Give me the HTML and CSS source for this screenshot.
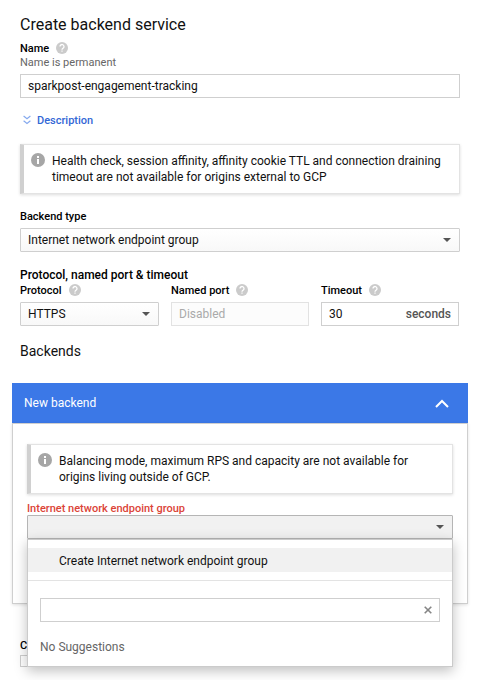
FILE: index.html
```html
<!DOCTYPE html>
<html lang="en">
<head>
<meta charset="utf-8">
<title>Create backend service</title>
<link rel="stylesheet" href="styles.css">
</head>
<body>
<svg width="0" height="0" class="defs" aria-hidden="true">
  <symbol id="help" viewBox="0 0 12 12">
    <circle cx="6" cy="6" r="6" fill="#cbcbcb"/>
    <path d="M4 4.600a2 2 0 1 1 3.100 1.600C6.400 6.700 6 6.900 6 7.700" fill="none" stroke="#fff" stroke-width="1.300"/>
    <path d="M5.400 8.500h1.200v1.200H5.400z" fill="#fff"/>
  </symbol>
  <symbol id="info" viewBox="0 0 14 14">
    <circle cx="7" cy="7" r="7" fill="#a6a6a6"/>
    <path d="M6 3h2v2H6zM6 6h2v5H6z" fill="#fff"/>
  </symbol>
</svg>
<main class="form">
  <h1 class="title">Create backend service</h1>
  <label class="label">Name <svg class="help"><use href="#help"/></svg></label>
  <p class="hint">Name is permanent</p>
  <div class="field">sparkpost-engagement-tracking</div>

  <a class="toggle">
    <svg class="toggle-icon" viewBox="0 0 8 10"><path d="M.6 1 4 3.700 7.400 1M.6 5.700 4 8.400 7.400 5.700" fill="none" stroke="#85a9ee" stroke-width="1.200"/></svg>
    Description
  </a>

  <div class="notice">
    <svg class="info"><use href="#info"/></svg>
    <p>Health check, session affinity, affinity cookie TTL and connection draining<br>timeout are not available for origins external to GCP</p>
  </div>

  <label class="label type-label">Backend type</label>
  <div class="field select"><span class="type-value">Internet network endpoint group</span><i class="arrow"></i></div>

  <h2 class="group">Protocol, named port &amp; timeout</h2>
  <div class="columns">
    <div>
      <label class="label">Protocol <svg class="help"><use href="#help"/></svg></label>
      <div class="field select"><span class="https">HTTPS</span><i class="arrow"></i></div>
    </div>
    <div>
      <label class="label">Named port <svg class="help"><use href="#help"/></svg></label>
      <div class="field disabled">Disabled</div>
    </div>
    <div>
      <label class="label">Timeout <svg class="help"><use href="#help"/></svg></label>
      <div class="field select timeout"><span>30</span><span class="unit">seconds</span></div>
    </div>
  </div>

  <h2 class="section">Backends</h2>
  <section class="panel">
    <header class="panel-head">
      <span>New backend</span>
      <svg class="chevron" viewBox="0 0 14 9"><path d="M1 8 7 2l6 6" fill="none" stroke="#fff" stroke-width="2"/></svg>
    </header>
    <div class="panel-body">
      <div class="notice">
        <svg class="info"><use href="#info"/></svg>
        <p>Balancing mode, maximum RPS and capacity are not available for<br>origins living outside of GCP.</p>
      </div>
      <label class="label error">Internet network endpoint group</label>
      <div class="dropdown">
        <div class="field select open"><span></span><i class="arrow"></i></div>
        <div class="menu">
          <div class="menu-item">Create Internet network endpoint group</div>
          <div class="menu-search">
            <svg class="clear" viewBox="0 0 8 8"><path d="m.7.7 6.600 6.600M7.300.7.7 7.300" stroke="#858585" stroke-width="1.600"/></svg>
          </div>
          <p class="empty">No Suggestions</p>
        </div>
      </div>
    </div>
  </section>
  <label class="label cdn">C</label>
  <div class="box"></div>
</main>
</body>
</html>
```
FILE: styles.css
```css
* { box-sizing: border-box; }
body {
  margin: 0;
  min-height: 680px;
  background: #fff;
  color: #111;
  font: 12px/16px Roboto, "Liberation Sans", sans-serif;
}
h1, h2, p { margin: 0; font-weight: 400; }
svg { flex: none; }
.defs { position: absolute; }
.form { width: 440px; margin-left: 20px; padding-top: 15px; }
.title { font-size: 16px; line-height: 20px; height: 26px; }
.label { display: flex; align-items: center; height: 16px; font-size: 11px; line-height: 16px; font-weight: 500; color: #000; }
.help { width: 12px; height: 12px; margin: -2px 0 0 7px; }
.hint { font-size: 11px; line-height: 12px; height: 17px; color: #666; }
.field {
  height: 24px;
  padding: 0 7px;
  border: 1px solid #cfcfcf;
  line-height: 22px;
  white-space: nowrap;
}
.select {
  display: flex;
  align-items: center;
  justify-content: space-between;
  border-radius: 1px;
  background: linear-gradient(#fff, #f8f8f8);
}
.arrow { border: 4px solid transparent; border-top-color: #555; border-bottom: 0; margin-right: 1px; }
.toggle {
  display: flex;
  align-items: center;
  height: 16px;
  margin: 15px 0;
  padding-left: 3px;
  color: #3367d6;
  font-size: 11px;
  font-weight: 500;
}
.toggle-icon { width: 8px; height: 10px; margin: -2px 6px 0 0; }
.notice {
  display: flex;
  height: 50px;
  padding: 8px 7px;
  border: 1px solid #e3e3e3;
  border-left: 4px solid #d0d0d0;
  background: #fff;
  box-shadow: 0 1px 3px rgba(0, 0, 0, .14);
  white-space: nowrap;
}
.info { width: 14px; height: 14px; margin-right: 7px; }
.type-label { margin: 15px 0 3px; }
.group { margin-top: 15px; height: 16px; font-size: 12px; font-weight: 500; color: #000; }
.columns { display: grid; grid-template-columns: 139px 138px 138px; gap: 12px; }
.columns .label { margin-bottom: 3px; }
.disabled { background: #fcfcfc; border-color: #e2e2e2; color: #aaa; }
.timeout { background: #fff; border-radius: 0; }
.unit { color: #555; font-weight: 500; }
.section { margin: 15px 0 22px; font-size: 14px; line-height: 20px; }
.panel { margin: 0 -8px; }
.panel-head {
  display: flex;
  align-items: center;
  justify-content: space-between;
  height: 40px;
  padding: 0 19px 0 12px;
  background: #3b78e7;
  color: #fff;
}
.chevron { width: 14px; height: 9px; }
.panel-body {
  height: 181px;
  padding: 20px 14px 0;
  border: 1px solid #cfcfcf;
  box-shadow: 0 1px 3px rgba(0, 0, 0, .12);
}
.error { color: #db4437; margin-top: 8px; height: 13px; }
.dropdown { position: relative; }
.open { background: #f1f1f1; border-color: #b5b5b5; }
.menu {
  position: absolute;
  top: 24px;
  left: 0;
  right: 0;
  height: 128px;
  padding-top: 8px;
  border: 1px solid #cbcbcb;
  background: #fff;
  box-shadow: 0 4px 12px rgba(0, 0, 0, .25);
}
.menu-item { height: 24px; padding-left: 31px; background: #f1f1f1; line-height: 26px; }
.menu-search {
  display: flex;
  align-items: center;
  justify-content: flex-end;
  position: relative;
  height: 24px;
  margin: 26px 12px 0;
  padding-right: 7px;
  border: 1px solid #cfcfcf;
}
.menu-search::before { content: ""; position: absolute; top: -19px; left: -13px; right: -13px; border-top: 1px solid #e3e3e3; }
.clear { width: 8px; height: 8px; }
.empty { margin: 17px 12px 0; color: #666; }
.cdn { margin-top: 34px; }
.box { width: 12px; height: 12px; margin-top: 1px; border: 1px solid #cfcfcf; }
```
